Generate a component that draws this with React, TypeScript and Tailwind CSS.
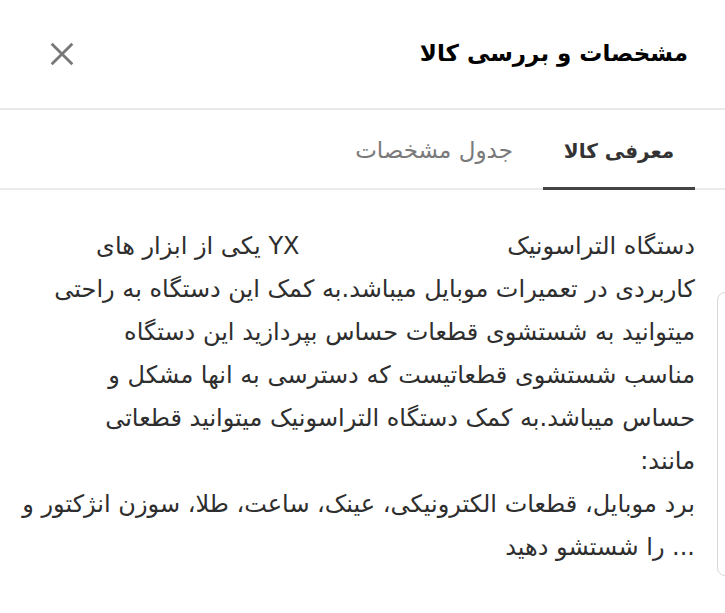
import React from 'react';

const lines = [
  'کاربردی در تعمیرات موبایل میباشد.به کمک این دستگاه به راحتی',
  'میتوانید به شستشوی قطعات حساس بپردازید این دستگاه',
  'مناسب شستشوی قطعاتیست که دسترسی به انها مشکل و',
  'حساس میباشد.به کمک دستگاه التراسونیک میتوانید قطعاتی',
  'مانند:',
  'برد موبایل، قطعات الکترونیکی، عینک، ساعت، طلا، سوزن انژکتور و',
  '... را شستشو دهید',
];

export default function App() {
  return (
    <div
      dir="rtl"
      className="relative w-[725px] h-[613px] bg-white overflow-hidden text-[#222]"
      style={{ fontFamily: '"DejaVu Sans", "Noto Sans", sans-serif' }}
    >
      {/* header */}
      <div className="h-[110px] flex items-center justify-between pr-[37px] pl-[48px] border-b-2 border-[#e9e9e9]">
        <h1 className="text-[23px] font-bold text-black pb-[2px]">مشخصات و بررسی کالا</h1>
        <button className="w-[28px] h-[28px] flex items-center justify-center text-[#777]">
          <svg viewBox="0 0 24 24" width="28" height="28" fill="none" stroke="currentColor" strokeWidth="2.4" strokeLinecap="square">
            <path d="M4 4 L20 20 M20 4 L4 20" />
          </svg>
        </button>
      </div>

      {/* tabs */}
      <div className="flex items-end h-[80px] pr-[30px] border-b-2 border-[#ebebeb]">
        <div className="w-[152px] h-full flex items-center justify-center border-b-[3px] border-[#444] -mb-[2px] pt-[2px] text-[20px] font-bold text-[#333]">
          معرفی کالا
        </div>
        <div className="w-[218px] h-full flex items-center justify-center pt-[2px] text-[23px] text-[#7a7a7a]">
          جدول مشخصات
        </div>
      </div>

      {/* body */}
      <div className="pr-[30px] pt-[35px] text-[24px] leading-[43px] text-[#2e2e2e]">
        <div className="whitespace-nowrap">
          دستگاه التراسونیک <span className="inline-block w-[200px]"></span>YX یکی از ابزار های
        </div>
        {lines.map((l, i) => (
          <div key={i} className="whitespace-nowrap">
            {l}
          </div>
        ))}
      </div>

      {/* faint edge of adjacent card */}
      <div className="absolute right-[-12px] top-[292px] w-[20px] h-[284px] border border-[#d8d8d8] rounded-[8px]"></div>
    </div>
  );
}
